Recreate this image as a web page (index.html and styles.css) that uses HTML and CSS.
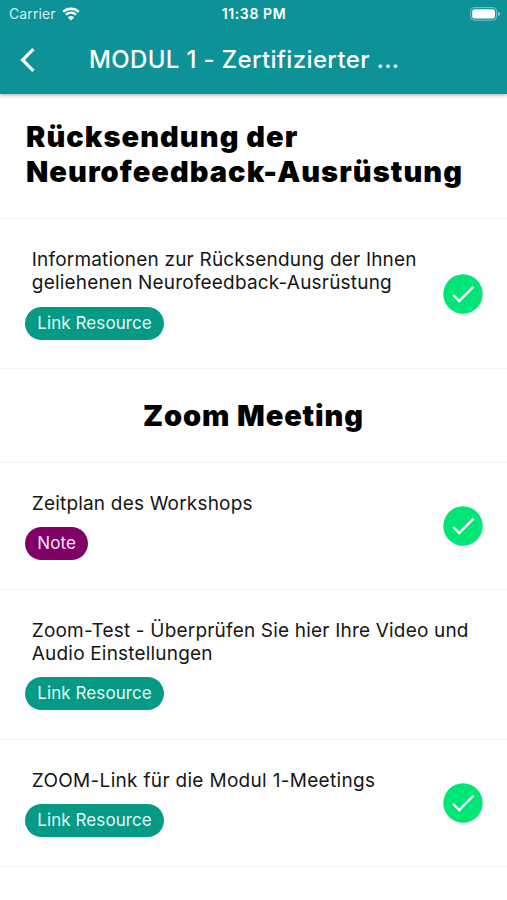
FILE: index.html
```html
<!DOCTYPE html>
<html lang="de">
<head>
  <meta charset="utf-8">
  <title>MODUL 1</title>
  <link rel="stylesheet" href="styles.css">
</head>
<body>

<header class="app-bar">
  <div class="status-bar">
    <div class="status-left">
      <span class="carrier">Carrier</span>
      <svg class="wifi" width="18" height="14" viewBox="0 0 18 14">
        <path d="M1.2 4.9a11.2 11.2 0 0 1 15.6 0M3.9 7.8a7.3 7.3 0 0 1 10.2 0" fill="none" stroke="#fff" stroke-width="2.3"/>
        <path d="M9 13.6L5.9 10.4a4.4 4.4 0 0 1 6.2 0z" fill="#fff"/>
      </svg>
    </div>
    <span class="clock">11:38 PM</span>
    <div class="status-right">
      <svg class="battery" width="31" height="14" viewBox="0 0 31 14">
        <rect x="0.6" y="0.6" width="26" height="12.6" rx="4" fill="none" stroke="#fff" stroke-opacity=".45"/>
        <rect x="2.2" y="2.2" width="22.8" height="9.4" rx="2.4" fill="#fff"/>
        <path d="M28 4.8q2 .6 2 2.1t-2 2.1z" fill="#fff" fill-opacity=".5"/>
      </svg>
    </div>
  </div>
  <div class="toolbar">
    <svg class="back" width="16" height="26" viewBox="0 0 16 26">
      <path d="M14.4 2.2L3.6 13l10.8 10.8" fill="none" stroke="#fff" stroke-width="3.2"/>
    </svg>
    <h1>MODUL 1 - Zertifizierter ...</h1>
  </div>
</header>

<main>
  <div class="section section-first">
    <h2>Rücksendung der<br>Neurofeedback-Ausrüstung</h2>
  </div>

  <div class="item">
    <div class="item-text">
      <p>Informationen zur Rücksendung der Ihnen<br>geliehenen Neurofeedback-Ausrüstung</p>
      <span class="tag">Link Resource</span>
    </div>
    <svg class="check" width="40" height="40" viewBox="0 0 40 40">
      <circle cx="20" cy="20" r="19.7"/>
      <path d="M10.2 21l6 6L30.5 12.7"/>
    </svg>
  </div>

  <div class="section section-center">
    <h2>Zoom Meeting</h2>
  </div>

  <div class="item">
    <div class="item-text">
      <p>Zeitplan des Workshops</p>
      <span class="tag tag-note">Note</span>
    </div>
    <svg class="check" width="40" height="40" viewBox="0 0 40 40">
      <circle cx="20" cy="20" r="19.7"/>
      <path d="M10.2 21l6 6L30.5 12.7"/>
    </svg>
  </div>

  <div class="item">
    <div class="item-text">
      <p>Zoom-Test - Überprüfen Sie hier Ihre Video und<br>Audio Einstellungen</p>
      <span class="tag">Link Resource</span>
    </div>
  </div>

  <div class="item">
    <div class="item-text">
      <p class="wide">ZOOM-Link für die Modul 1-Meetings</p>
      <span class="tag">Link Resource</span>
    </div>
    <svg class="check" width="40" height="40" viewBox="0 0 40 40">
      <circle cx="20" cy="20" r="19.7"/>
      <path d="M10.2 21l6 6L30.5 12.7"/>
    </svg>
  </div>
</main>

</body>
</html>
```
FILE: styles.css
```css
* {
  box-sizing: border-box;
}
body {
  margin: 0;
  height: 900px;
  overflow: hidden;
  background: #fff;
  color: #161616;
  font-family: Inter, "Liberation Sans", sans-serif;
}
h1, h2, p {
  margin: 0;
}
svg {
  display: block;
  flex: none;
}

/* header */
.app-bar {
  height: 94px;
  background: #0d9298;
  color: #fff;
  box-shadow: 0 1px 4px rgba(0, 0, 0, 0.35);
}
.status-bar {
  display: grid;
  grid-template-columns: 1fr auto 1fr;
  align-items: center;
  height: 27px;
  padding: 0 6px 0 9px;
}
.status-left {
  display: flex;
  align-items: center;
  gap: 6px;
}
.carrier {
  font-size: 14px;
  letter-spacing: 0.1px;
  color: #d5eeee;
}
.clock {
  margin-right: 2px;
  font-size: 14px;
  font-weight: 600;
  letter-spacing: 0.6px;
}
.status-right {
  display: flex;
  justify-content: flex-end;
}
.toolbar {
  display: flex;
  align-items: center;
  height: 65px;
  padding-left: 19px;
}
.toolbar h1 {
  margin-left: 54px;
  font-size: 24px;
  font-weight: 500;
  letter-spacing: 0.35px;
  white-space: nowrap;
}

/* list */
.section {
  border-bottom: 1px solid #f2f2f2;
  padding: 0 26px;
}
.section h2 {
  color: #000;
  font-size: 29px;
  font-weight: 900;
  line-height: 35px;
  letter-spacing: 1.05px;
  white-space: nowrap;
}
.section-first {
  height: 125px;
  padding-top: 25px;
}
.section-center {
  height: 93.4px;
  padding-top: 29px;
  text-align: center;
}
.section-center h2 {
  letter-spacing: 0.9px;
}
.item {
  display: flex;
  align-items: center;
  justify-content: space-between;
  padding: 29px 24px 28.7px 25.3px;
  border-bottom: 1px solid #f2f2f2;
}
.item-text p {
  margin: 0 0 12px 6.5px;
  font-size: 19px;
  line-height: 23.3px;
  letter-spacing: 0.19px;
  white-space: nowrap;
}
.item-text .wide {
  letter-spacing: 0.31px;
}
.tag {
  display: block;
  width: fit-content;
  height: 33px;
  padding: 0 12px;
  border-radius: 17px;
  background: #059a86;
  color: #e4f8f4;
  font-size: 17px;
  line-height: 33px;
  letter-spacing: 0.08px;
}
.tag-note {
  padding: 0 12.5px 0 12px;
  background: #800066;
  color: #fbe6f6;
}
.check circle {
  fill: #00e676;
}
.check path {
  fill: none;
  stroke: #fff;
  stroke-width: 2.4;
}
```
